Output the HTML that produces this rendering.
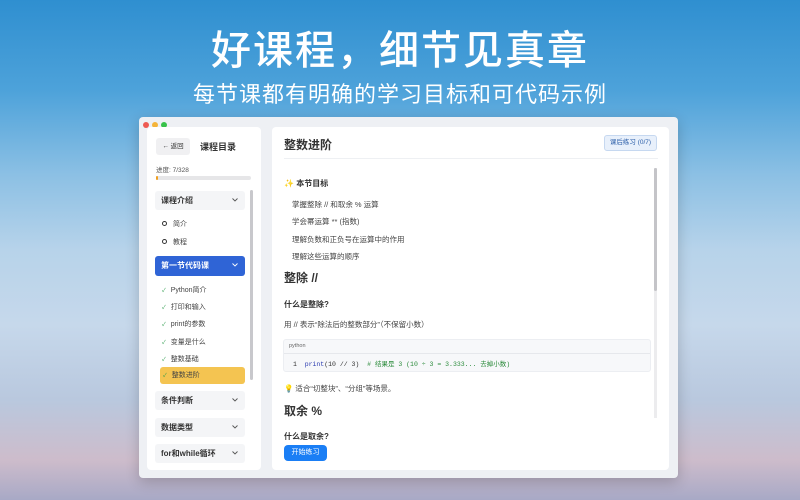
<!DOCTYPE html>
<html><head><meta charset="utf-8"><style>
*{margin:0;padding:0;box-sizing:border-box}
body{width:800px;height:500px;overflow:hidden;font-family:"Liberation Sans","Noto Sans CJK SC",sans-serif;position:relative;
background:linear-gradient(180deg,#2f8fd0 0%,#4da2da 18%,#8cc0e4 35%,#b7d3ea 50%,#c6d8eb 65%,#b9c8de 80%,#cdbccb 92%,#a8a9c6 100%);}
.abs{position:absolute}
.t1{left:0;width:800px;top:18px;text-align:center;color:#fff;font-size:40px;font-weight:500;letter-spacing:2px}
.t2{left:0;width:800px;top:77px;text-align:center;color:#fff;font-size:22px;letter-spacing:1px}
.win{left:139px;top:117px;width:539px;height:361px;background:#eef0f4;border-radius:4px;box-shadow:0 4px 14px rgba(0,0,0,.2)}
.dot{width:6px;height:6px;border-radius:50%;top:5px}
.side{left:8px;top:10px;width:114px;height:343px;background:#fff;border-radius:4px}
.main{left:133px;top:10px;width:397px;height:343px;background:#fff;border-radius:4px}
.acc{left:8px;width:90px;height:19px;background:#f4f5f7;border-radius:3px;font-size:8px;font-weight:bold;color:#333;padding-left:6px;line-height:19px}
.acc svg{position:absolute;right:7px;top:7px}
.it{left:15px;font-size:7px;color:#444}
.ck{color:#2a9a4a;margin-right:5px;font-size:5.5px}
.c{font-size:7.5px;color:#444;left:20px}
</style></head><body>
<div class="abs t1">好课程，细节见真章</div>
<div class="abs t2">每节课都有明确的学习目标和可代码示例</div>
<div class="abs win">
 <div class="abs dot" style="left:4px;background:#ee5a52"></div>
 <div class="abs dot" style="left:13px;background:#f4b43a"></div>
 <div class="abs dot" style="left:22px;background:#38c24a"></div>
 <div class="abs side">
  <div class="abs" style="left:9px;top:11px;width:34px;height:17px;background:#f0f0f2;border-radius:3px;font-size:6.5px;color:#333;line-height:17px;text-align:center">&#8592; 返回</div>
  <div class="abs" style="left:53px;top:13px;font-size:9px;font-weight:bold;color:#333">课程目录</div>
  <div class="abs" style="left:9px;top:37px;font-size:6.5px;color:#555">进度: 7/328</div>
  <div class="abs" style="left:9px;top:49px;width:95px;height:4px;background:#e6e6e8;border-radius:2px"><div style="width:2px;height:4px;background:#f0a020;border-radius:2px"></div></div>
  <div class="abs" style="left:103px;top:63px;width:3px;height:190px;background:#c8c8cc;border-radius:2px"></div>
  <div class="abs acc" style="top:64px">课程介绍<svg width="6" height="4" viewBox="0 0 6 4"><path d="M0.5 0.5L3 3L5.5 0.5" fill="none" stroke="#555" stroke-width="0.9"/></svg></div>
  <div class="abs it" style="top:92px"><span style="display:inline-block;width:5px;height:5px;border:1px solid #333;border-radius:50%;margin-right:6px"></span>简介</div>
  <div class="abs it" style="top:110px"><span style="display:inline-block;width:5px;height:5px;border:1px solid #333;border-radius:50%;margin-right:6px"></span>教程</div>
  <div class="abs acc" style="top:129px;height:20px;line-height:20px;background:#2f64d6;color:#fff">第一节代码课<svg width="6" height="4" viewBox="0 0 6 4"><path d="M0.5 0.5L3 3L5.5 0.5" fill="none" stroke="#fff" stroke-width="0.9"/></svg></div>
  <div class="abs it" style="top:158px"><span class="ck">✓</span>Python简介</div>
  <div class="abs it" style="top:175px"><span class="ck">✓</span>打印和输入</div>
  <div class="abs it" style="top:192px"><span class="ck">✓</span>print的参数</div>
  <div class="abs it" style="top:210px"><span class="ck">✓</span>变量是什么</div>
  <div class="abs it" style="top:227px"><span class="ck">✓</span>整数基础</div>
  <div class="abs" style="left:13px;top:240px;width:85px;height:17px;background:#f4c451;border-radius:3px;font-size:7px;color:#444;line-height:17px;padding-left:3px"><span class="ck">✓</span>整数进阶</div>
  <div class="abs acc" style="top:264px">条件判断<svg width="6" height="4" viewBox="0 0 6 4"><path d="M0.5 0.5L3 3L5.5 0.5" fill="none" stroke="#555" stroke-width="0.9"/></svg></div>
  <div class="abs acc" style="top:291px">数据类型<svg width="6" height="4" viewBox="0 0 6 4"><path d="M0.5 0.5L3 3L5.5 0.5" fill="none" stroke="#555" stroke-width="0.9"/></svg></div>
  <div class="abs acc" style="top:317px">for和while循环<svg width="6" height="4" viewBox="0 0 6 4"><path d="M0.5 0.5L3 3L5.5 0.5" fill="none" stroke="#555" stroke-width="0.9"/></svg></div>
 </div>
 <div class="abs main">
  <div class="abs" style="left:12px;top:9px;font-size:12px;font-weight:bold;color:#333">整数进阶</div>
  <div class="abs" style="left:332px;top:8px;width:53px;height:16px;background:#e8f0fb;border:1px solid #c6d8f0;border-radius:3px;font-size:6.5px;color:#2b5ea8;text-align:center;line-height:14px">课后练习 (0/7)</div>
  <div class="abs" style="left:12px;top:31px;width:374px;height:1px;background:#eef0f3"></div>
  <div class="abs" style="left:382px;top:41px;width:3px;height:250px;background:#ececee"></div>
  <div class="abs" style="left:382px;top:41px;width:3px;height:123px;background:#c4c4c8;border-radius:2px"></div>
  <div class="abs" style="left:12px;top:51px;font-size:8px;font-weight:bold;color:#333"><span style="color:#f3c13a">✨</span> 本节目标</div>
  <div class="abs c" style="top:72px">掌握整除 // 和取余 % 运算</div>
  <div class="abs c" style="top:89px">学会幂运算 ** (指数)</div>
  <div class="abs c" style="top:107px">理解负数和正负号在运算中的作用</div>
  <div class="abs c" style="top:124px">理解这些运算的顺序</div>
  <div class="abs" style="left:12px;top:142px;font-size:12px;font-weight:bold;color:#333">整除 //</div>
  <div class="abs" style="left:12px;top:172px;font-size:8px;font-weight:bold;color:#333">什么是整除?</div>
  <div class="abs" style="left:12px;top:192px;font-size:7.5px;color:#444">用 // 表示“除法后的整数部分”（不保留小数）</div>
  <div class="abs" style="left:11px;top:212px;width:368px;height:33px;background:#f7f8fa;border:1px solid #eceef2;border-radius:3px">
   <div class="abs" style="left:5px;top:3px;font-size:5.5px;color:#666">python</div>
   <div class="abs" style="left:0;top:13px;width:366px;height:1px;background:#e6e8ec"></div>
   <div class="abs" style="left:9px;top:18px;font-family:'Liberation Mono','Noto Sans CJK SC',monospace;font-size:6.5px;color:#333;white-space:pre">1  <span style="color:#2b3bb0">print</span>(10 // 3)  <span style="color:#2a8a3a"># 结果是 3 (10 ÷ 3 = 3.333... 去掉小数)</span></div>
  </div>
  <div class="abs" style="left:12px;top:256px;font-size:7.5px;color:#444"><span style="color:#f3c13a">💡</span> 适合“切整块”、“分组”等场景。</div>
  <div class="abs" style="left:12px;top:275px;font-size:12px;font-weight:bold;color:#333">取余 %</div>
  <div class="abs" style="left:12px;top:304px;font-size:8px;font-weight:bold;color:#333">什么是取余?</div>
  <div class="abs" style="left:12px;top:318px;width:43px;height:16px;background:#1a7ef5;border-radius:4px;color:#fff;font-size:7px;text-align:center;line-height:16px">开始练习</div>
 </div>
</div>
</body></html>
